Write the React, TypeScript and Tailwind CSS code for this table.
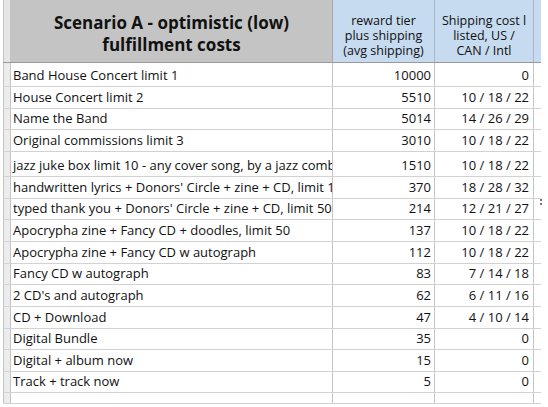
import React from "react";

const rows: { a: string; b: string; c: string; h: string }[] = [
  { a: "Band House Concert limit 1", b: "10000", c: "0", h: "h-[24px]" },
  { a: "House Concert limit 2", b: "5510", c: "10 / 18 / 22", h: "h-[22px]" },
  { a: "Name the Band", b: "5014", c: "14 / 26 / 29", h: "h-[21px]" },
  { a: "Original commissions limit 3", b: "3010", c: "10 / 18 / 22", h: "h-[22px]" },
  { a: "jazz juke box limit 10 - any cover song, by a jazz combo", b: "1510", c: "10 / 18 / 22", h: "h-[25px]" },
  { a: "handwritten lyrics + Donors' Circle + zine + CD, limit 10", b: "370", c: "18 / 28 / 32", h: "h-[22px]" },
  { a: "typed thank you + Donors' Circle + zine + CD, limit 50", b: "214", c: "12 / 21 / 27", h: "h-[21px]" },
  { a: "Apocrypha zine + Fancy CD + doodles, limit 50", b: "137", c: "10 / 18 / 22", h: "h-[22px]" },
  { a: "Apocrypha zine + Fancy CD w autograph", b: "112", c: "10 / 18 / 22", h: "h-[22px]" },
  { a: "Fancy CD w autograph", b: "83", c: "7 / 14 / 18", h: "h-[21px]" },
  { a: "2 CD's and autograph", b: "62", c: "6 / 11 / 16", h: "h-[22px]" },
  { a: "CD + Download", b: "47", c: "4 / 10 / 14", h: "h-[22px]" },
  { a: "Digital Bundle", b: "35", c: "0", h: "h-[21px]" },
  { a: "Digital + album now", b: "15", c: "0", h: "h-[22px]" },
  { a: "Track + track now", b: "5", c: "0", h: "h-[21px]" },
];

export default function App() {
  return (
    <div
      className="relative w-[548px] h-[407px] bg-white overflow-hidden text-[#111]"
      style={{ fontFamily: '"Open Sans", "DejaVu Sans", sans-serif' }}
    >
      <div className="ml-[3px] w-[538px] flex flex-col">
        {/* header */}
        <div className="flex h-[63px] border-b border-[#9a9a9a]">
          <div className="w-[8px] shrink-0 bg-[#e6e6e6] border-l border-r border-[#c4c4c4]" />
          <div className="w-[322px] shrink-0 bg-[#c4c4c4] border-r border-[#a8a8a8] flex flex-col items-center justify-center pt-[5px]">
            <div className="text-[17px] font-bold leading-[22px] text-[#111]">Scenario A - optimistic (low)</div>
            <div className="text-[17px] font-bold leading-[22px] text-[#111]">fulfillment costs</div>
          </div>
          <div className="w-[102px] shrink-0 bg-[#c6daf0] border-r border-[#a9b9cb] flex flex-col items-center justify-center pt-[8px] text-[12.5px] leading-[15px] text-center whitespace-nowrap">
            <div>reward tier</div>
            <div>plus shipping</div>
            <div>(avg shipping)</div>
          </div>
          <div className="w-[99px] shrink-0 bg-[#c6daf0] border-r border-[#a9b9cb] flex flex-col items-center justify-center pt-[8px] text-[12.5px] leading-[15px] text-center whitespace-nowrap">
            <div>Shipping cost l</div>
            <div>listed, US /</div>
            <div>CAN / Intl</div>
          </div>
          <div className="w-[7px] shrink-0 bg-[#c6daf0]" />
        </div>
        {rows.map((r, i) => (
          <div key={i} className={`flex border-b border-[#d2d2d2] ${r.h}`}>
            <div className="w-[8px] shrink-0 bg-[#ececec] border-l border-r border-[#c4c4c4]" />
            <div className="w-[322px] shrink-0 border-r border-[#c4c4c4] flex items-end pb-[3px] pl-[2px] overflow-hidden whitespace-nowrap text-[13px] leading-[16px]">
              {r.a}
            </div>
            <div className="w-[102px] shrink-0 border-r border-[#c4c4c4] flex items-end justify-end pb-[3px] pr-[3px] text-[13px] leading-[16px]">
              {r.b}
            </div>
            <div className="w-[99px] shrink-0 border-r border-[#c4c4c4] flex items-end justify-end pb-[3px] pr-[4px] text-[13px] leading-[16px] whitespace-nowrap">
              {r.c}
            </div>
            <div className="w-[7px] shrink-0" />
          </div>
        ))}
        <div className="flex h-[11px] border-b border-[#d2d2d2]">
          <div className="w-[8px] shrink-0 bg-[#ececec] border-l border-r border-[#c4c4c4]" />
          <div className="w-[322px] shrink-0 border-r border-[#c4c4c4]" />
          <div className="w-[102px] shrink-0 border-r border-[#c4c4c4]" />
          <div className="w-[99px] shrink-0 border-r border-[#c4c4c4]" />
          <div className="w-[7px] shrink-0" />
        </div>
      </div>
      <div className="absolute left-[540px] top-[199px] flex flex-col gap-[2px]">
        <div className="w-[2px] h-[2px] bg-[#777]" />
        <div className="w-[2px] h-[2px] bg-[#777]" />
      </div>
    </div>
  );
}
